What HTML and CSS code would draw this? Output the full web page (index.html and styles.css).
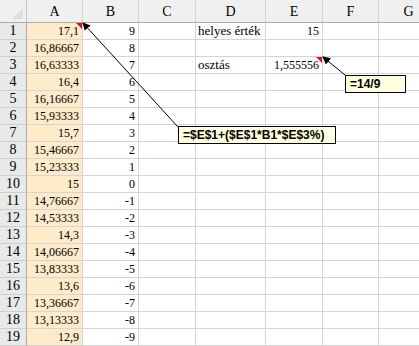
FILE: index.html
```html
<!DOCTYPE html>
<html>
<head>
<meta charset="utf-8">
<link rel="stylesheet" href="styles.css">
</head>
<body>
<div class="sheet">
  <div class="grid">
    <div class="corner"><span class="tri"></span></div>
    <div class="ch">A</div><div class="ch">B</div><div class="ch">C</div><div class="ch">D</div><div class="ch">E</div><div class="ch">F</div><div class="ch">G</div>

    <div class="rh">1</div><div class="c a note">17,1</div><div class="c">9</div><div class="c"></div><div class="c t">helyes érték</div><div class="c">15</div><div class="c"></div><div class="c"></div>
    <div class="rh">2</div><div class="c a">16,86667</div><div class="c">8</div><div class="c"></div><div class="c"></div><div class="c"></div><div class="c"></div><div class="c"></div>
    <div class="rh">3</div><div class="c a">16,63333</div><div class="c">7</div><div class="c"></div><div class="c t">osztás</div><div class="c note">1,555556</div><div class="c"></div><div class="c"></div>
    <div class="rh">4</div><div class="c a">16,4</div><div class="c">6</div><div class="c"></div><div class="c"></div><div class="c"></div><div class="c"></div><div class="c"></div>
    <div class="rh">5</div><div class="c a">16,16667</div><div class="c">5</div><div class="c"></div><div class="c"></div><div class="c"></div><div class="c"></div><div class="c"></div>
    <div class="rh">6</div><div class="c a">15,93333</div><div class="c">4</div><div class="c"></div><div class="c"></div><div class="c"></div><div class="c"></div><div class="c"></div>
    <div class="rh">7</div><div class="c a">15,7</div><div class="c">3</div><div class="c"></div><div class="c"></div><div class="c"></div><div class="c"></div><div class="c"></div>
    <div class="rh">8</div><div class="c a">15,46667</div><div class="c">2</div><div class="c"></div><div class="c"></div><div class="c"></div><div class="c"></div><div class="c"></div>
    <div class="rh">9</div><div class="c a">15,23333</div><div class="c">1</div><div class="c"></div><div class="c"></div><div class="c"></div><div class="c"></div><div class="c"></div>
    <div class="rh">10</div><div class="c a">15</div><div class="c">0</div><div class="c"></div><div class="c"></div><div class="c"></div><div class="c"></div><div class="c"></div>
    <div class="rh">11</div><div class="c a">14,76667</div><div class="c">-1</div><div class="c"></div><div class="c"></div><div class="c"></div><div class="c"></div><div class="c"></div>
    <div class="rh">12</div><div class="c a">14,53333</div><div class="c">-2</div><div class="c"></div><div class="c"></div><div class="c"></div><div class="c"></div><div class="c"></div>
    <div class="rh">13</div><div class="c a">14,3</div><div class="c">-3</div><div class="c"></div><div class="c"></div><div class="c"></div><div class="c"></div><div class="c"></div>
    <div class="rh">14</div><div class="c a">14,06667</div><div class="c">-4</div><div class="c"></div><div class="c"></div><div class="c"></div><div class="c"></div><div class="c"></div>
    <div class="rh">15</div><div class="c a">13,83333</div><div class="c">-5</div><div class="c"></div><div class="c"></div><div class="c"></div><div class="c"></div><div class="c"></div>
    <div class="rh">16</div><div class="c a">13,6</div><div class="c">-6</div><div class="c"></div><div class="c"></div><div class="c"></div><div class="c"></div><div class="c"></div>
    <div class="rh">17</div><div class="c a">13,36667</div><div class="c">-7</div><div class="c"></div><div class="c"></div><div class="c"></div><div class="c"></div><div class="c"></div>
    <div class="rh">18</div><div class="c a">13,13333</div><div class="c">-8</div><div class="c"></div><div class="c"></div><div class="c"></div><div class="c"></div><div class="c"></div>
    <div class="rh">19</div><div class="c a">12,9</div><div class="c">-9</div><div class="c"></div><div class="c"></div><div class="c"></div><div class="c"></div><div class="c"></div>
  </div>

  <svg class="arrows" width="419" height="346" viewBox="0 0 419 346">
    <defs>
      <marker id="ah" markerWidth="8" markerHeight="8" refX="7" refY="4" orient="auto" markerUnits="userSpaceOnUse">
        <path d="M0,0 L8,4 L0,8 Z" fill="#000"/>
      </marker>
    </defs>
    <line x1="178" y1="127" x2="83" y2="23" stroke="#000" stroke-width="1" marker-end="url(#ah)"/>
    <line x1="345" y1="75" x2="323" y2="57" stroke="#000" stroke-width="1" marker-end="url(#ah)"/>
  </svg>

  <div class="callout callout-formula">=$E$1+($E$1*B1*$E$3%)</div>
  <div class="callout callout-div">=14/9</div>
</div>
</body>
</html>
```

FILE: styles.css
```css
html, body {
  margin: 0;
  padding: 0;
  background: #ffffff;
  overflow: hidden;
}

.sheet {
  position: relative;
  width: 419px;
  height: 346px;
  overflow: hidden;
}

.grid {
  display: grid;
  grid-template-columns: 27px 56px 56px 57px 70px 57px 56px 60px;
  grid-template-rows: 23px repeat(19, 17px);
  font-family: "Liberation Serif", "Times New Roman", serif;
  font-size: 12px;
  color: #000;
}

.corner {
  position: relative;
  background: #f0f0f0;
  border-right: 1px solid #c6c6c6;
  border-bottom: 1px solid #ababab;
}

.corner .tri {
  position: absolute;
  right: 3px;
  bottom: 3px;
  width: 0;
  height: 0;
  border-left: 11px solid transparent;
  border-bottom: 11px solid #dedede;
}

.ch {
  background: #f0f0f0;
  border-right: 1px solid #d4d4d4;
  border-bottom: 1px solid #ababab;
  font-size: 14px;
  display: flex;
  align-items: center;
  justify-content: center;
  padding-top: 1px;
}

.rh {
  background: #e9e9e9;
  border-right: 1px solid #a9a9a9;
  border-bottom: 1px solid #cfcfcf;
  font-size: 14px;
  display: flex;
  align-items: center;
  justify-content: center;
}

.c {
  position: relative;
  border-right: 1px solid #d4d4d4;
  border-bottom: 1px solid #d4d4d4;
  text-align: right;
  padding-right: 3px;
  line-height: 16px;
  white-space: nowrap;
}

.c.a {
  background: #fdebc9;
}

.c.t {
  text-align: left;
  padding-left: 2px;
  font-size: 13px;
}

.note::after {
  content: "";
  position: absolute;
  right: 0;
  top: 0;
  width: 0;
  height: 0;
  border-left: 6px solid transparent;
  border-top: 6px solid #d9141b;
}

.arrows {
  position: absolute;
  left: 0;
  top: 0;
  pointer-events: none;
}

.callout {
  position: absolute;
  box-sizing: border-box;
  height: 18px;
  background: #ffffe1;
  border: 1px solid #000;
  font-family: "Liberation Sans", Arial, sans-serif;
  font-weight: bold;
  font-size: 12px;
  line-height: 16px;
  padding: 0 4px;
  white-space: nowrap;
  color: #000;
}

.callout-formula {
  left: 178px;
  top: 126px;
  width: 158px;
}

.callout-div {
  left: 345px;
  top: 75px;
  width: 61px;
}
```
